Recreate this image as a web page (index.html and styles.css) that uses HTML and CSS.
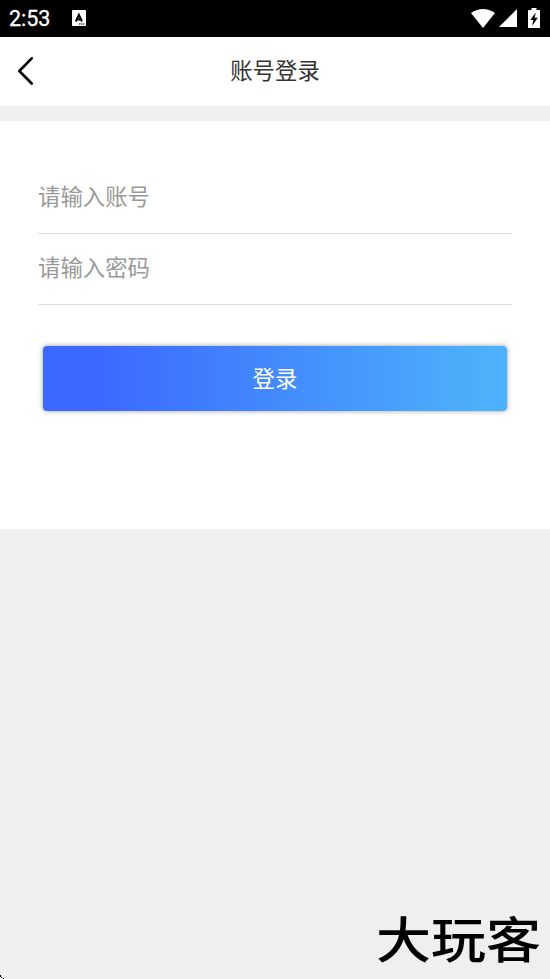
FILE: index.html
```html
<!DOCTYPE html>
<html lang="zh-CN">
<head>
<meta charset="utf-8">
<title>账号登录</title>
<link rel="stylesheet" href="styles.css">
</head>
<body>
<div class="status">
  <span class="time">2:53</span>
  <svg class="app-badge" width="14" height="16" viewBox="0 0 14 16"><rect width="14" height="16" rx="1" fill="#fff"/><path d="M3.8 11.5 6.9 4.8 10 11.5M5 9.5H9" fill="none" stroke="#000" stroke-width="2"/><path d="M7 14H12.5" stroke="#000" stroke-width="1" stroke-dasharray="1.5 .6"/></svg>
  <div class="indicators">
    <svg width="24" height="19" viewBox="0 0 24 19"><path d="M0 4Q12-4 24 4L12 19Z" fill="#fff"/></svg>
    <svg width="18" height="18" viewBox="0 0 18 18"><path d="M18 0V18H0Z" fill="#fff"/></svg>
    <svg class="battery" width="12" height="20" viewBox="0 0 12 20"><path d="M3.5 0H8.5V2H11.5Q12 2 12 2.5V19.5Q12 20 11.5 20H.5Q0 20 0 19.5V2.5Q0 2 .5 2H3.5Z" fill="#fff"/><path d="M7.8 4.5 2.3 12H5.3L4.2 17.8 9.8 9.7H6.7Z" fill="#000"/></svg>
  </div>
</div>
<header class="header">
  <svg class="back" width="18" height="30" viewBox="0 0 18 30"><path d="M15.7 2.3 3.3 15 15.7 27.5" fill="none" stroke="#000" stroke-width="2.6" stroke-linecap="round" stroke-linejoin="round"/></svg>
  <h1 class="title">账号登录</h1>
</header>
<main class="panel">
  <div class="field">请输入账号</div>
  <div class="field">请输入密码</div>
  <button class="submit">登录</button>
</main>
<footer class="footer"><span class="brand">大玩客</span></footer>
<svg class="corner" width="4" height="4" viewBox="0 0 4 4" shape-rendering="crispEdges"><path d="M0 0H1V2H0ZM1 2H2V3H1ZM3 3H4V4H3Z" fill="#000"/><path d="M0 2H1V4H0ZM1 3H2V4H1Z" fill="#fff"/></svg>
</body>
</html>
```
FILE: styles.css
```css
* { box-sizing: border-box; }
body {
  margin: 0;
  height: 979px;
  overflow: hidden;
  display: flex;
  flex-direction: column;
  background: #efefef;
  color: #333;
  font-family: "Noto Sans CJK SC", sans-serif;
}
svg { display: block; flex: none; }
.status {
  height: 37px;
  flex: none;
  display: flex;
  align-items: center;
  padding: 0 10px 0 9px;
  background: #000;
  color: #fff;
}
.time { width: 63px; font: 400 21.5px/37px Roboto, sans-serif; -webkit-text-stroke: .3px #fff; padding-bottom: 1px; }
.app-badge { margin-top: -1px; }
.indicators { margin: -1px 0 0 auto; display: flex; align-items: center; gap: 4px; }
.battery { margin-left: 7px; }
.header {
  height: 69px;
  flex: none;
  display: grid;
  grid-template-columns: 60px 1fr 60px;
  align-items: center;
  padding-bottom: 1px;
  background: #fff;
}
.back { margin-left: 16px; }
.title { margin: 0; padding-bottom: 5px; text-align: center; font-size: 22.4px; font-weight: 400; line-height: 32px; }
.panel {
  height: 408px;
  flex: none;
  margin-top: 15px;
  padding: 42px 38px 0;
  background: #fff;
}
.field {
  height: 71px;
  border-bottom: 1px solid #dfdfdf;
  color: #999;
  font-size: 22.4px;
  line-height: 65px;
}
.submit {
  display: block;
  width: 464px;
  height: 65px;
  margin: 41px auto 0;
  padding: 0 0 3px;
  border: 0;
  border-radius: 4px;
  background: linear-gradient(90deg, #3b69ff 12%, #4cb1fa 95%);
  box-shadow: 0 0 5px rgba(0, 0, 0, .4);
  color: #fff;
  font: 400 22.4px/62px "Noto Sans CJK SC", sans-serif;
}
.footer { margin-top: auto; display: flex; justify-content: flex-end; padding: 0 9px 7px 0; }
.brand { color: #000; font-size: 55px; line-height: 70px; font-weight: 500; transform: scaleY(.88); }
.corner { position: absolute; left: 0; bottom: 0; }
```
